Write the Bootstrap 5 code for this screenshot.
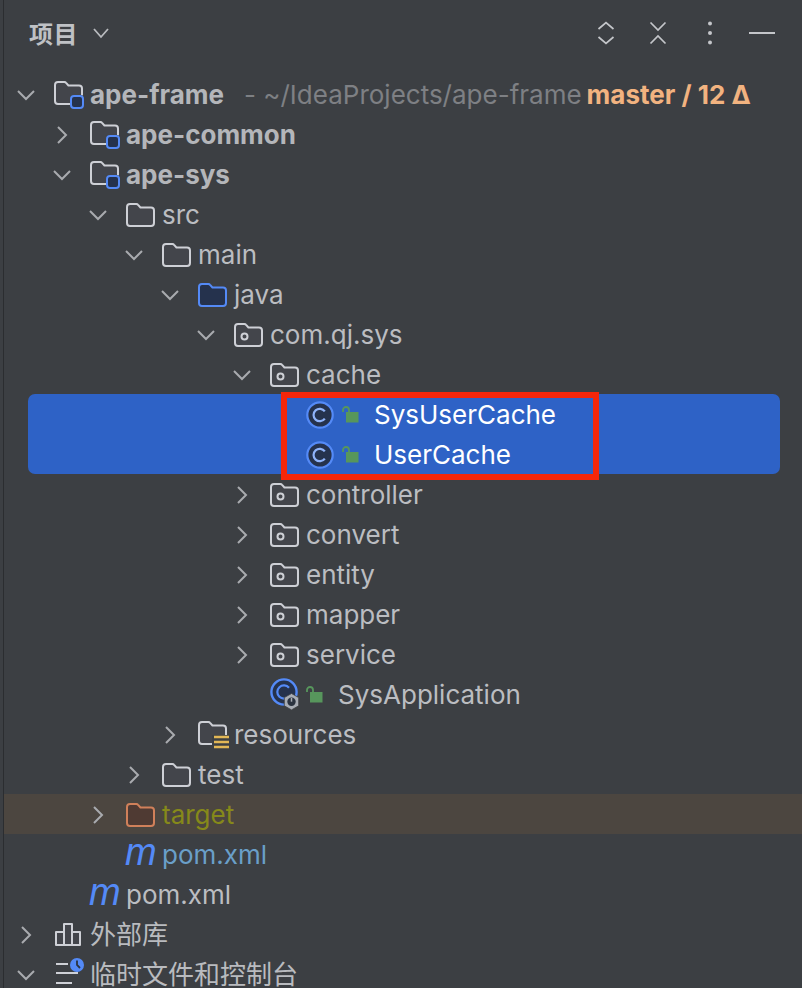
<!DOCTYPE html>
<html lang="zh">
<head>
<meta charset="utf-8">
<title>项目</title>
<link href="https://cdn.jsdelivr.net/npm/bootstrap@5.3.0/dist/css/bootstrap.min.css" rel="stylesheet">
<style>
html,body{height:988px;overflow:hidden;background:#3c3f43;}
body{font-family:Inter,"Noto Sans CJK SC",sans-serif;font-size:26px;color:#bbbdc1;}
.panel-wrap{height:988px;margin-left:3px;border-left:1px solid #2b2d30;overflow:hidden;}
.panel-head{height:75px;padding:0 27px 10px 25px;}
.panel-title{font-family:"Noto Sans CJK SC",sans-serif;font-size:24px;font-weight:700;letter-spacing:.5px;color:#bfc1c5;line-height:1;}
.title-chev{margin-left:14px;}
.head-btn{display:block;}
.head-gap{margin-left:34px;}
.head-gap-end{margin-left:30px;}
.t-row{height:40px;white-space:nowrap;line-height:40px;position:relative;}
.lv0{padding-left:12px}.lv1{padding-left:48px}.lv2{padding-left:84px}.lv3{padding-left:120px}
.lv4{padding-left:156px}.lv5{padding-left:192px}.lv6{padding-left:228px}.lv7{padding-left:264px}
.twist{width:38px;flex:none;display:flex;align-items:center;}
.twist.blank{height:1px;}
.ico{width:36px;flex:none;display:flex;align-items:center;height:40px;}
.lockslot{width:32px;flex:none;display:flex;align-items:center;height:40px;}
.strong-name{font-weight:700;color:#b4b6ba;}
.path-hint{color:#7e8084;margin-left:20px;}
.vcs-tag{color:#f2b380;font-weight:700;margin-left:5px;}
.sel-group{position:relative;}
.sel-bg{position:absolute;left:24px;right:22px;top:-1px;bottom:1px;background:#2e62c6;border-radius:7px;}
.sel-box{position:absolute;left:277px;top:-3px;width:318px;height:88px;border:6px solid #f5260a;pointer-events:none;}
.sel-text{color:#fff;}
.row-target{background:#4c4640;margin-top:-1px;margin-bottom:1px;padding-top:1px;}
.target-name{color:#86891a;}
.pom-blue{color:#6a9fc9;}
.m-glyph{font-family:"Liberation Sans",sans-serif;font-style:italic;font-size:38px;color:#548af7;line-height:40px;display:block;margin-top:-6px;margin-left:-1px;}
.cjk-name{font-family:"Noto Sans CJK SC",sans-serif;font-size:26px;color:#b9bbbf;line-height:36px;padding-bottom:4px;}
</style>
</head>
<body>
<svg width="0" height="0" class="position-absolute">
<defs>
<symbol id="i-down" viewBox="0 0 20 20"><path d="M2 6l8 8 8-8" fill="none" stroke="#a9abaf" stroke-width="2"/></symbol>
<symbol id="i-right" viewBox="0 0 20 20"><path d="M6 2l8 8-8 8" fill="none" stroke="#a9abaf" stroke-width="2"/></symbol>
<symbol id="i-folder" viewBox="0 0 30 26"><path d="M4 2h6.400c.7 0 1.300.3 1.700.8L14.400 5.500H25c1.700 0 3 1.300 3 3V21c0 1.700-1.300 3-3 3H4c-1.700 0-3-1.300-3-3V5c0-1.700 1.300-3 3-3z" fill="#43454b" stroke="#ced0d6" stroke-width="2"/></symbol>
<symbol id="i-module" viewBox="0 0 30 30"><path d="M4 2h6.400c.7 0 1.300.3 1.700.8L14.400 5.500H25c1.700 0 3 1.300 3 3V21c0 1.700-1.300 3-3 3H4c-1.700 0-3-1.300-3-3V5c0-1.700 1.300-3 3-3z" fill="#43454b" stroke="#ced0d6" stroke-width="2"/><rect x="16" y="15" width="14" height="14" rx="3" fill="#3c3f43"/><rect x="17" y="16" width="12" height="12" rx="3" fill="#25324d" stroke="#548af7" stroke-width="2"/></symbol>
<symbol id="i-java" viewBox="0 0 30 26"><path d="M4 2h6.400c.7 0 1.300.3 1.700.8L14.400 5.500H25c1.700 0 3 1.300 3 3V21c0 1.700-1.300 3-3 3H4c-1.700 0-3-1.300-3-3V5c0-1.700 1.300-3 3-3z" fill="#25324d" stroke="#548af7" stroke-width="2"/></symbol>
<symbol id="i-pkg" viewBox="0 0 30 26"><path d="M4 2h6.400c.7 0 1.300.3 1.700.8L14.400 5.500H25c1.700 0 3 1.300 3 3V21c0 1.700-1.300 3-3 3H4c-1.700 0-3-1.300-3-3V5c0-1.700 1.300-3 3-3z" fill="#43454b" stroke="#ced0d6" stroke-width="2"/><circle cx="10.500" cy="14.500" r="3" fill="none" stroke="#ced0d6" stroke-width="2"/></symbol>
<symbol id="i-res" viewBox="0 0 32 30"><path d="M4 2h6.400c.7 0 1.300.3 1.700.8L14.400 5.500H25c1.700 0 3 1.300 3 3V21c0 1.700-1.300 3-3 3H4c-1.700 0-3-1.300-3-3V5c0-1.700 1.300-3 3-3z" fill="#43454b" stroke="#ced0d6" stroke-width="2"/><rect x="14" y="15" width="18" height="15" fill="#3c3f43"/><path d="M16 17h15M16 22h15M16 27h15" stroke="#e2b756" stroke-width="2.400"/></symbol>
<symbol id="i-target" viewBox="0 0 30 26"><path d="M4 2h6.400c.7 0 1.300.3 1.700.8L14.400 5.500H25c1.700 0 3 1.300 3 3V21c0 1.700-1.300 3-3 3H4c-1.700 0-3-1.300-3-3V5c0-1.700 1.300-3 3-3z" fill="#4f3a33" stroke="#d0805a" stroke-width="2"/></symbol>
<symbol id="i-class" viewBox="0 0 28 28"><circle cx="14" cy="14" r="12.700" fill="#25324d" stroke="#548af7" stroke-width="2.200"/><path d="M18.800 10.400a6.200 6.200 0 1 0 0 7.200" fill="none" stroke="#8fb3fa" stroke-width="2.200"/></symbol>
<symbol id="i-spring" viewBox="0 0 30 34"><circle cx="14" cy="14" r="12.600" fill="#25324d" stroke="#548af7" stroke-width="2.400"/><path d="M19 9.800a6.600 6.600 0 1 0 0 8.400" fill="none" stroke="#548af7" stroke-width="2.200"/><path d="M21.500 15.500l7.200 4.100v8.200l-7.200 4.100-7.200-4.100v-8.200z" fill="#a8adb5" stroke="#3c3f43" stroke-width=".8"/><circle cx="21.500" cy="23.700" r="4.200" fill="#2b3340"/><path d="M21.500 20v3.700" stroke="#a8adb5" stroke-width="1.500"/></symbol>
<symbol id="i-lock" viewBox="0 0 18 18"><path d="M1 6V4a3 3 0 0 1 6 0v2" fill="none" stroke="#57965c" stroke-width="1.800"/><rect x="4" y="6" width="12.500" height="10.500" fill="#57965c"/></symbol>
<symbol id="i-lib" viewBox="0 0 28 26"><path d="M2 10h8v13H2zM10 2h8v21h-8zM18 10h8v13h-8z" fill="#43454b" stroke="#ced0d6" stroke-width="2" stroke-linejoin="round"/></symbol>
<symbol id="i-scratch" viewBox="0 0 30 36"><path d="M2 7h12M2 16h22M2 26h16" stroke="#ced0d6" stroke-width="2"/><circle cx="23" cy="8" r="7" fill="#548af7"/><path d="M23 3.500V8l3 3" fill="none" stroke="#2b3340" stroke-width="1.800"/></symbol>
</defs>
</svg>

<div class="panel-wrap">
  <div class="panel-head d-flex align-items-center">
    <span class="panel-title">项目</span>
    <svg class="title-chev" width="18" height="18" viewBox="0 0 18 18"><path d="M2 5l7 8 7-8" fill="none" stroke="#b9bbbf" stroke-width="1.800"/></svg>
    <div class="d-flex align-items-center ms-auto">
      <svg class="head-btn" width="18" height="24" viewBox="0 0 18 24"><path d="M1.500 8L9 1.500 16.500 8M1.500 16L9 22.500 16.500 16" fill="none" stroke="#c4c6ca" stroke-width="1.700"/></svg>
      <svg class="head-btn head-gap" width="18" height="24" viewBox="0 0 18 24"><path d="M1.500 1.500L9 9l7.500-7.500M1.500 22.500L9 15l7.500 7.500" fill="none" stroke="#c4c6ca" stroke-width="1.700"/></svg>
      <svg class="head-btn head-gap" width="18" height="24" viewBox="0 0 18 24"><circle cx="9" cy="2.500" r="2" fill="#c4c6ca"/><circle cx="9" cy="12" r="2" fill="#c4c6ca"/><circle cx="9" cy="21.500" r="2" fill="#c4c6ca"/></svg>
      <svg class="head-btn head-gap-end" width="26" height="4" viewBox="0 0 26 4"><path d="M0 2h26" stroke="#c4c6ca" stroke-width="2"/></svg>
    </div>
  </div>

  <div class="t-row d-flex align-items-center lv0"><span class="twist"><svg width="20" height="20"><use href="#i-down"/></svg></span><span class="ico"><svg width="30" height="30"><use href="#i-module"/></svg></span><span class="strong-name">ape-frame</span><span class="path-hint">- ~/IdeaProjects/ape-frame</span><span class="vcs-tag">master / 12 Δ</span></div>
  <div class="t-row d-flex align-items-center lv1"><span class="twist"><svg width="20" height="20"><use href="#i-right"/></svg></span><span class="ico"><svg width="30" height="30"><use href="#i-module"/></svg></span><span class="strong-name">ape-common</span></div>
  <div class="t-row d-flex align-items-center lv1"><span class="twist"><svg width="20" height="20"><use href="#i-down"/></svg></span><span class="ico"><svg width="30" height="30"><use href="#i-module"/></svg></span><span class="strong-name">ape-sys</span></div>
  <div class="t-row d-flex align-items-center lv2"><span class="twist"><svg width="20" height="20"><use href="#i-down"/></svg></span><span class="ico"><svg width="30" height="26"><use href="#i-folder"/></svg></span><span>src</span></div>
  <div class="t-row d-flex align-items-center lv3"><span class="twist"><svg width="20" height="20"><use href="#i-down"/></svg></span><span class="ico"><svg width="30" height="26"><use href="#i-folder"/></svg></span><span>main</span></div>
  <div class="t-row d-flex align-items-center lv4"><span class="twist"><svg width="20" height="20"><use href="#i-down"/></svg></span><span class="ico"><svg width="30" height="26"><use href="#i-java"/></svg></span><span>java</span></div>
  <div class="t-row d-flex align-items-center lv5"><span class="twist"><svg width="20" height="20"><use href="#i-down"/></svg></span><span class="ico"><svg width="30" height="26"><use href="#i-pkg"/></svg></span><span>com.qj.sys</span></div>
  <div class="t-row d-flex align-items-center lv6"><span class="twist"><svg width="20" height="20"><use href="#i-down"/></svg></span><span class="ico"><svg width="30" height="26"><use href="#i-pkg"/></svg></span><span>cache</span></div>

  <div class="sel-group">
    <div class="sel-bg"></div>
    <div class="t-row d-flex align-items-center lv7"><span class="twist blank"></span><span class="ico"><svg width="28" height="28"><use href="#i-class"/></svg></span><span class="lockslot"><svg width="18" height="18"><use href="#i-lock"/></svg></span><span class="sel-text">SysUserCache</span></div>
    <div class="t-row d-flex align-items-center lv7"><span class="twist blank"></span><span class="ico"><svg width="28" height="28"><use href="#i-class"/></svg></span><span class="lockslot"><svg width="18" height="18"><use href="#i-lock"/></svg></span><span class="sel-text">UserCache</span></div>
    <div class="sel-box"></div>
  </div>

  <div class="t-row d-flex align-items-center lv6"><span class="twist"><svg width="20" height="20"><use href="#i-right"/></svg></span><span class="ico"><svg width="30" height="26"><use href="#i-pkg"/></svg></span><span>controller</span></div>
  <div class="t-row d-flex align-items-center lv6"><span class="twist"><svg width="20" height="20"><use href="#i-right"/></svg></span><span class="ico"><svg width="30" height="26"><use href="#i-pkg"/></svg></span><span>convert</span></div>
  <div class="t-row d-flex align-items-center lv6"><span class="twist"><svg width="20" height="20"><use href="#i-right"/></svg></span><span class="ico"><svg width="30" height="26"><use href="#i-pkg"/></svg></span><span>entity</span></div>
  <div class="t-row d-flex align-items-center lv6"><span class="twist"><svg width="20" height="20"><use href="#i-right"/></svg></span><span class="ico"><svg width="30" height="26"><use href="#i-pkg"/></svg></span><span>mapper</span></div>
  <div class="t-row d-flex align-items-center lv6"><span class="twist"><svg width="20" height="20"><use href="#i-right"/></svg></span><span class="ico"><svg width="30" height="26"><use href="#i-pkg"/></svg></span><span>service</span></div>
  <div class="t-row d-flex align-items-center lv6"><span class="twist blank"></span><span class="ico"><svg width="30" height="34"><use href="#i-spring"/></svg></span><span class="lockslot"><svg width="18" height="18"><use href="#i-lock"/></svg></span><span>SysApplication</span></div>
  <div class="t-row d-flex align-items-center lv4"><span class="twist"><svg width="20" height="20"><use href="#i-right"/></svg></span><span class="ico"><svg width="32" height="30"><use href="#i-res"/></svg></span><span>resources</span></div>
  <div class="t-row d-flex align-items-center lv3"><span class="twist"><svg width="20" height="20"><use href="#i-right"/></svg></span><span class="ico"><svg width="30" height="26"><use href="#i-folder"/></svg></span><span>test</span></div>
  <div class="t-row d-flex align-items-center lv2 row-target"><span class="twist"><svg width="20" height="20"><use href="#i-right"/></svg></span><span class="ico"><svg width="30" height="26"><use href="#i-target"/></svg></span><span class="target-name">target</span></div>
  <div class="t-row d-flex align-items-center lv2"><span class="twist blank"></span><span class="ico"><span class="m-glyph">m</span></span><span class="pom-blue">pom.xml</span></div>
  <div class="t-row d-flex align-items-center lv1"><span class="twist blank"></span><span class="ico"><span class="m-glyph">m</span></span><span>pom.xml</span></div>
  <div class="t-row d-flex align-items-center lv0"><span class="twist"><svg width="20" height="20"><use href="#i-right"/></svg></span><span class="ico"><svg width="28" height="26"><use href="#i-lib"/></svg></span><span class="cjk-name">外部库</span></div>
  <div class="t-row d-flex align-items-center lv0"><span class="twist"><svg width="20" height="20"><use href="#i-down"/></svg></span><span class="ico"><svg width="30" height="36"><use href="#i-scratch"/></svg></span><span class="cjk-name">临时文件和控制台</span></div>
</div>
</body>
</html>
